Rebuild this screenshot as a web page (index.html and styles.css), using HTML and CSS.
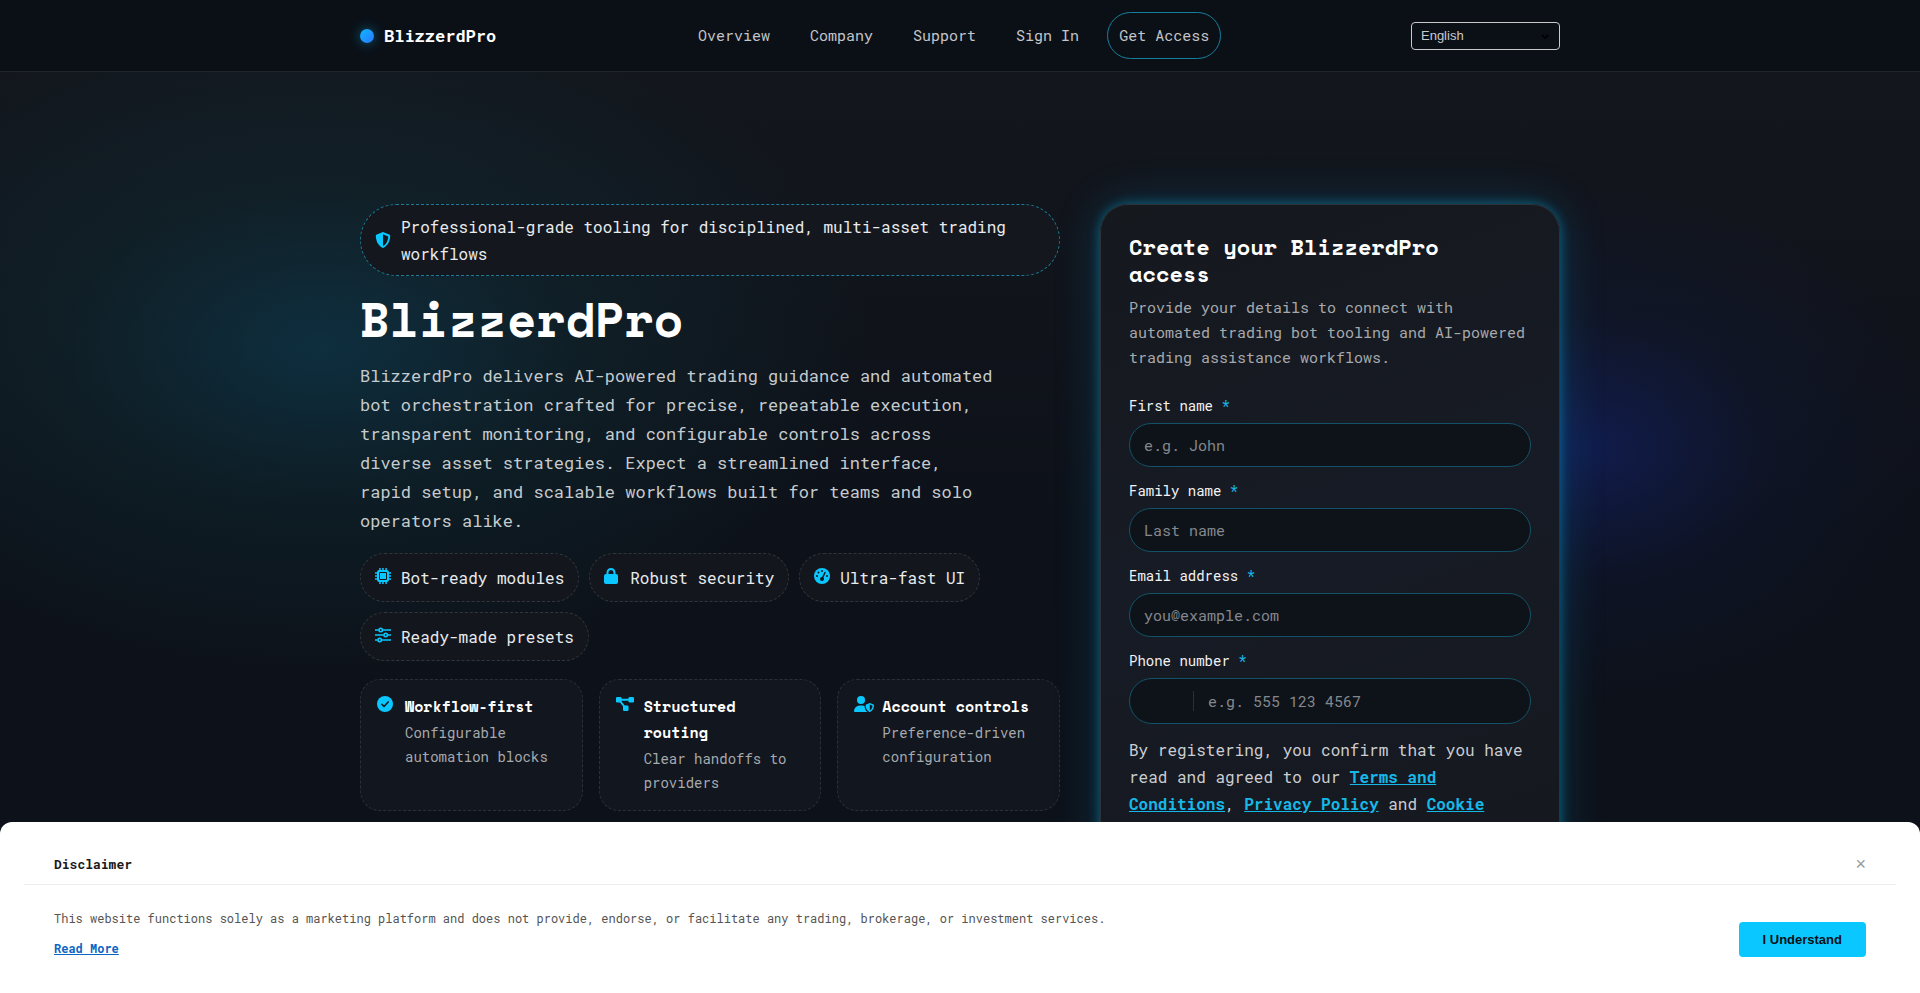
FILE: index.html
```html
<!DOCTYPE html>
<html lang="en">
<head>
<meta charset="utf-8">
<meta name="viewport" content="width=device-width, initial-scale=1">
<title>BlizzerdPro</title>
<link rel="stylesheet" href="styles.css">
</head>
<body>
<header class="site-header">
  <div class="container header-row">
    <a class="brand" href="#"><span class="brand-dot"></span>BlizzerdPro</a>
    <nav class="nav">
      <a class="nav-link" href="#">Overview</a>
      <a class="nav-link" href="#">Company</a>
      <a class="nav-link" href="#">Support</a>
      <a class="nav-link" href="#">Sign In</a>
      <a class="nav-link nav-cta" href="#">Get Access</a>
    </nav>
    <div class="lang">
      <select class="lang-select" aria-label="Language"><option>English</option></select>
      <svg class="lang-arrow" viewBox="0 0 10 6" aria-hidden="true"><path d="M1 1l4 4 4-4" fill="none" stroke="#000" stroke-width="2"/></svg>
    </div>
  </div>
</header>

<main class="hero">
  <div class="container hero-grid">
    <section class="intro">
      <p class="badge">
        <svg class="icon" viewBox="0 0 16 16"><path fill-rule="evenodd" d="M8 0l6.2 2.6c.6.3 1 .8 1 1.5C15.100 8 13.500 13.300 8.600 15.800a1.400 1.400 0 0 1-1.200 0C2.500 13.300.9 8 .8 4.100c0-.7.4-1.200 1-1.500zM8 2.200v11.700c3.900-2 5.100-6.200 5.200-9.500z"/></svg>
        <span>Professional-grade tooling for disciplined, multi-asset trading workflows</span>
      </p>
      <h1 class="title">BlizzerdPro</h1>
      <p class="lead">BlizzerdPro delivers AI-powered trading guidance and automated bot orchestration crafted for precise, repeatable execution, transparent monitoring, and configurable controls across diverse asset strategies. Expect a streamlined interface, rapid setup, and scalable workflows built for teams and solo operators alike.</p>
      <ul class="pills">
        <li class="pill">
          <svg class="icon" viewBox="0 0 16 16"><path fill-rule="evenodd" d="M4.200 0h1.500v2h1.550V0h1.500v2h1.550V0h1.500v2A2.200 2.200 0 0 1 14 4.200h2v1.500h-2v1.550h2v1.500h-2v1.550h2v1.500h-2A2.200 2.200 0 0 1 11.800 14v2h-1.500v-2H8.750v2h-1.500v-2H5.700v2H4.200v-2A2.200 2.200 0 0 1 2 11.800H0v-1.500h2V8.750H0v-1.500h2V5.700H0V4.200h2A2.200 2.200 0 0 1 4.200 2zM5 4a1 1 0 0 0-1 1v6a1 1 0 0 0 1 1h6a1 1 0 0 0 1-1V5a1 1 0 0 0-1-1zm0 1h6v6H5z"/></svg>
          <span>Bot-ready modules</span>
        </li>
        <li class="pill">
          <svg class="icon" viewBox="0 0 16 16"><path fill-rule="evenodd" d="M2.500 6V4.500a4.500 4.500 0 0 1 9 0V6h.5a2 2 0 0 1 2 2v6a2 2 0 0 1-2 2H2a2 2 0 0 1-2-2V8a2 2 0 0 1 2-2zm2 0h5V4.500a2.500 2.500 0 0 0-5 0z"/></svg>
          <span>Robust security</span>
        </li>
        <li class="pill">
          <svg class="icon" viewBox="0 0 16 16"><circle cx="8" cy="8" r="8"/><g class="cut"><circle cx="8" cy="3" r="1"/><circle cx="4.500" cy="4.500" r="1"/><circle cx="3" cy="8" r="1"/><circle cx="13" cy="8" r="1"/><circle cx="8" cy="11" r="2"/></g><path class="cut-line" d="M8 11l3-6.500"/></svg>
          <span>Ultra-fast UI</span>
        </li>
        <li class="pill">
          <svg class="icon" viewBox="0 0 16 16"><g class="line"><path d="M0 3h3.700M7.800 3H16M0 8h8.700M12.800 8H16M0 13h2.700M6.800 13H16"/><circle cx="5.700" cy="3" r="1.700"/><circle cx="10.700" cy="8" r="1.700"/><circle cx="4.700" cy="13" r="1.700"/></g></svg>
          <span>Ready-made presets</span>
        </li>
      </ul>
      <div class="features">
        <article class="feature">
          <svg class="icon" viewBox="0 0 16 16"><circle cx="8" cy="8" r="8"/><path class="cut-line" d="M4.800 8.200l2.200 2.200 4.200-4.500"/></svg>
          <div>
            <h2 class="feature-title">Workflow-first</h2>
            <p class="feature-text">Configurable automation blocks</p>
          </div>
        </article>
        <article class="feature">
          <svg class="icon icon-mid" viewBox="0 0 18 16"><rect x="0" y="1" width="5.500" height="5.500" rx="1.300"/><rect x="12.500" y="1" width="5.500" height="5.500" rx="1.300"/><rect x="7" y="9.500" width="5.500" height="5.500" rx="1.300"/><path class="link" d="M4 3.700h10M4 5l4.700 6"/></svg>
          <div>
            <h2 class="feature-title">Structured routing</h2>
            <p class="feature-text">Clear handoffs to providers</p>
          </div>
        </article>
        <article class="feature">
          <svg class="icon icon-wide" viewBox="0 0 20 16"><circle cx="7" cy="4" r="4"/><path d="M5.600 9.500h2.800c.8 0 1.500.2 2.200.5 0 2.300.9 4.500 2.700 6H.9a.9.900 0 0 1-.9-.9 5.600 5.600 0 0 1 5.600-5.600z"/><path fill-rule="evenodd" d="M15.800 7l3.700 1.500c.3.100.5.400.5.800 0 2.200-.9 5.300-3.800 6.600a.9.900 0 0 1-.8 0c-2.900-1.300-3.800-4.400-3.800-6.600 0-.4.2-.7.5-.8zm0 1.600v5.800c2-1 2.700-3 2.700-4.700z"/></svg>
          <div>
            <h2 class="feature-title">Account controls</h2>
            <p class="feature-text">Preference-driven configuration</p>
          </div>
        </article>
      </div>
    </section>

    <form class="signup">
      <h2 class="signup-title">Create your BlizzerdPro access</h2>
      <p class="signup-text">Provide your details to connect with automated trading bot tooling and AI-powered trading assistance workflows.</p>
      <div class="fields">
        <div class="field">
          <label class="label" for="first">First name <span class="req">*</span></label>
          <input class="input" id="first" type="text" placeholder="e.g. John">
        </div>
        <div class="field">
          <label class="label" for="family">Family name <span class="req">*</span></label>
          <input class="input" id="family" type="text" placeholder="Last name">
        </div>
        <div class="field">
          <label class="label" for="email">Email address <span class="req">*</span></label>
          <input class="input" id="email" type="email" placeholder="you@example.com">
        </div>
        <div class="field">
          <label class="label" for="phone">Phone number <span class="req">*</span></label>
          <div class="phone">
            <span class="phone-code"></span>
            <input class="phone-input" id="phone" type="tel" placeholder="e.g. 555 123 4567">
          </div>
        </div>
        <p class="consent">By registering, you confirm that you have read and agreed to our <a href="#">Terms and Conditions</a>, <a href="#">Privacy Policy</a> and <a href="#">Cookie Policy</a>.</p>
      </div>
    </form>
  </div>
</main>

<aside class="disclaimer" aria-label="Disclaimer">
  <div class="disclaimer-head">
    <strong>Disclaimer</strong>
    <button class="close" type="button" aria-label="Close">×</button>
  </div>
  <div class="disclaimer-body">
    <div class="disclaimer-copy">
      <p>This website functions solely as a marketing platform and does not provide, endorse, or facilitate any trading, brokerage, or investment services.</p>
      <a href="#">Read More</a>
    </div>
    <button class="accept" type="button">I Understand</button>
  </div>
</aside>
</body>
</html>
```

FILE: styles.css
```css
:root {
  --accent: #0ac8ff;
  --mono: "Roboto Mono", "DejaVu Sans Mono", "Liberation Mono", monospace;
  --display: "Space Mono", "DejaVu Sans Mono", "Liberation Mono", monospace;
}

* { box-sizing: border-box; }

body, h1, h2, p, ul { margin: 0; }

body {
  min-height: 100vh;
  overflow: hidden;
  background: #0d1117;
  color: #e9ebee;
  font: 16px/27px var(--mono);
}

.container {
  width: 100%;
  max-width: 1240px;
  margin: 0 auto;
  padding: 0 20px;
}

.site-header {
  background: #0b1017;
  border-bottom: 1px solid #20252c;
}

.header-row {
  display: flex;
  align-items: center;
  justify-content: space-between;
  padding-top: 12px;
  padding-bottom: 12px;
}

.brand {
  display: flex;
  align-items: center;
  gap: 10px;
  color: #fff;
  font-size: 17px;
  font-weight: 700;
  text-decoration: none;
}

.brand-dot {
  width: 14px;
  height: 14px;
  border-radius: 50%;
  background: linear-gradient(135deg, #0fb6ff, #2a78ff);
  box-shadow: 0 0 12px rgba(10, 200, 255, .45);
}

.nav { display: flex; align-items: center; gap: 16px; }

.nav-link {
  padding: 9px 11px;
  border: 1px solid transparent;
  border-radius: 24px;
  color: #c3c5c8;
  font-size: 15px;
  text-decoration: none;
}

.nav-cta { border-color: #167f9d; }

.lang { position: relative; width: 149px; }

.lang-select {
  display: block;
  width: 100%;
  height: 28px;
  padding: 0 9px;
  appearance: none;
  border: 1px solid #c9cacc;
  border-radius: 4px;
  background: transparent;
  color: #c9cacc;
  font: 13px "Liberation Sans", Arial, sans-serif;
}

.lang-arrow {
  position: absolute;
  top: 12px;
  right: 11px;
  width: 8px;
  height: 5px;
}

.hero {
  min-height: calc(100vh - 72px);
  padding: 132px 0 60px;
  background:
    radial-gradient(560px 340px at 320px 274px, rgba(10, 120, 160, .27), rgba(14, 95, 105, .15) 45%, transparent 100%),
    radial-gradient(350px 260px at 1590px 376px, rgba(22, 50, 190, .3), rgba(20, 36, 120, .13) 50%, transparent 100%),
    linear-gradient(180deg, #13161d, #0d1119 50%, #0d121a);
}

.hero-grid {
  display: grid;
  grid-template-columns: 35fr 23fr;
  gap: 40px;
  align-items: start;
}

.intro { display: flex; flex-direction: column; gap: 18px; }

.icon { flex: none; width: 16px; height: 16px; fill: var(--accent); overflow: visible; }
.icon-mid { width: 18px; }
.icon-wide { width: 20px; }
.cut { fill: #12171d; }
.cut-line { fill: none; stroke: #12171d; stroke-width: 1.500; stroke-linecap: round; stroke-linejoin: round; }
.line { fill: none; stroke: var(--accent); stroke-width: 1.600; }
.link { fill: none; stroke: var(--accent); stroke-width: 2; }

.badge {
  display: flex;
  align-items: center;
  gap: 10px;
  padding: 8px 14px;
  border: 1px dashed #1b7d98;
  border-radius: 36px;
  background: #14181e;
}

.title {
  color: #fff;
  font: 700 48px/49px var(--display);
}

.lead {
  max-width: 640px;
  color: #c6cbce;
  font-size: 17px;
  line-height: 29px;
}

.pills {
  display: flex;
  flex-wrap: wrap;
  gap: 10px;
  padding: 0;
  list-style: none;
}

.pill {
  display: flex;
  align-items: center;
  gap: 10px;
  padding: 10px 14px;
  border: 1px dashed #31363d;
  border-radius: 25px;
  background: #13171d;
}

.pill .icon { margin-bottom: 3px; }

.features { display: grid; grid-template-columns: repeat(3, 1fr); gap: 16px; }

.feature {
  display: grid;
  grid-template-columns: 18px 1fr;
  gap: 10px;
  padding: 13px 16px 15px;
  border: 1px dashed #2b3037;
  border-radius: 20px;
  background: #12161e;
}

.feature .icon { margin-top: 3px; }

.feature-title { margin-bottom: 2px; color: #fff; font: 700 15px/26px var(--display); }
.feature-text { color: #a6a9ad; font-size: 14px; line-height: 24px; }

.signup {
  padding: 28px;
  border: 1px solid #2b3339;
  border-radius: 28px;
  background: linear-gradient(160deg, #15181d, #171b25 50%, #15181e);
  box-shadow: 0 0 12px rgba(10, 180, 235, .45), 0 0 46px rgba(10, 160, 220, .24);
}

.signup-title { color: #fff; font: 700 22px/27px var(--display); }
.signup-text { margin: 8px 0 24px; color: #a7a9ad; font-size: 15px; line-height: 25px; }
.fields { display: grid; gap: 12px; }
.field { display: grid; gap: 6px; }
.label { color: #f2f3f5; font-size: 14px; line-height: 23px; }
.req { color: #16b8e8; }

.input, .phone {
  width: 100%;
  height: 44px;
  padding: 0 14px;
  border: 1px solid #135266;
  border-radius: 23px;
  background: #0e131a;
}

.input, .phone-input { color: #e9ebee; font: 15px var(--mono); }
.input::placeholder, .phone-input::placeholder { color: #85888d; opacity: 1; }

.phone { display: flex; align-items: center; height: 46px; }

.phone-code { width: 50px; height: 20px; border-right: 1px solid #2b3036; }

.phone-input {
  flex: 1;
  min-width: 0;
  padding: 0 14px;
  border: 0;
  background: transparent;
}

.consent { color: #cbcdd0; }
.consent a { color: #16b8e8; font-weight: 700; }

.disclaimer {
  position: fixed;
  right: 0;
  bottom: 0;
  left: 0;
  padding: 24px 24px 36px;
  border-radius: 12px 12px 0 0;
  background: #fff;
  color: #555;
  font-size: 12px;
  line-height: 18px;
}

.disclaimer-head {
  display: flex;
  align-items: center;
  justify-content: space-between;
  padding: 8px 30px 10px;
  border-bottom: 1px solid #eee;
  color: #1a1a1a;
  font-size: 13px;
  line-height: 20px;
}

.close {
  height: 20px;
  padding: 0;
  border: 0;
  background: none;
  color: #999;
  font: 18px/20px "Liberation Sans", Arial, sans-serif;
}

.disclaimer-body {
  display: flex;
  align-items: flex-end;
  justify-content: space-between;
  gap: 24px;
  padding: 24px 30px 0;
}

.disclaimer-copy { display: grid; gap: 12px; justify-items: start; }
.disclaimer-copy a { color: #0a66c2; font-weight: 700; }

.accept {
  height: 35px;
  padding: 0 24px;
  border: 0;
  border-radius: 4px;
  background: var(--accent);
  color: #0b1017;
  font: 700 13px "Liberation Sans", Arial, sans-serif;
}
```
